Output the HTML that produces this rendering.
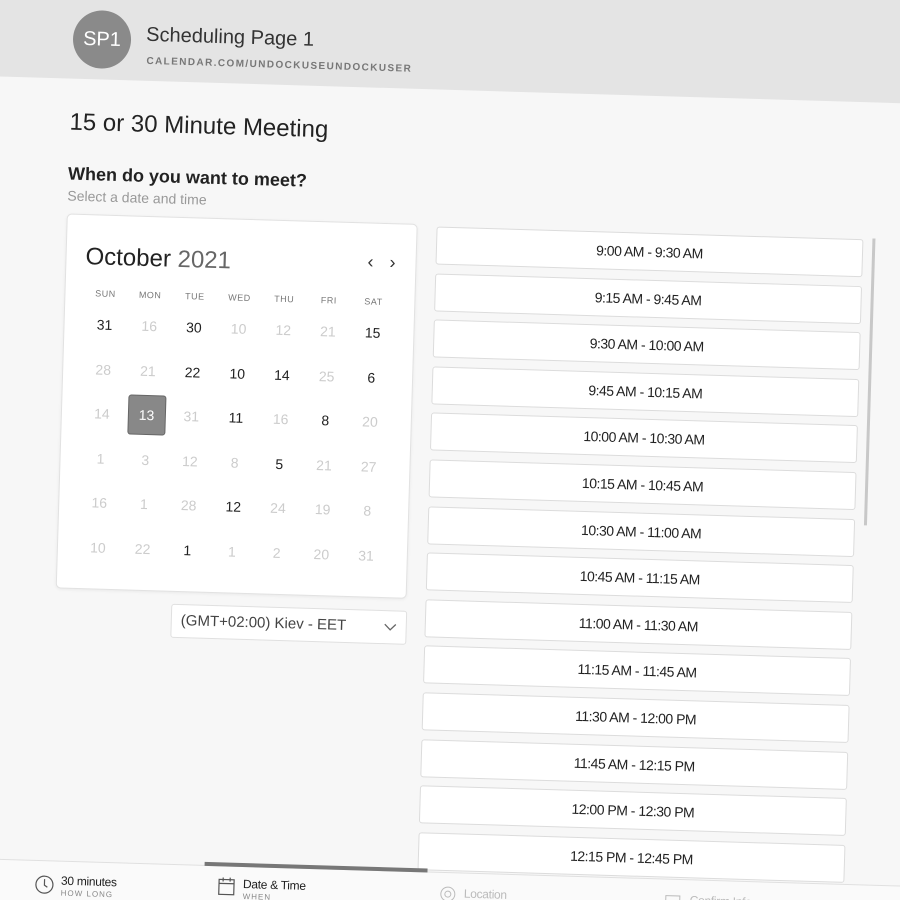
<!DOCTYPE html>
<html><head><meta charset="utf-8"><style>
*{margin:0;padding:0;box-sizing:border-box}
html,body{width:900px;height:900px;overflow:hidden;background:#f7f7f7;font-family:"Liberation Sans",sans-serif;color:#222}
.wrap{position:fixed;left:0;top:0;width:900px;height:900px;overflow:hidden;background:#f7f7f7}
.r{position:absolute;left:0;top:0;width:900px;height:900px;transform:rotate(1.7deg);transform-origin:450px 450px}
.a{position:absolute}
.hdr{left:-100px;top:-100px;width:1100px;height:190px;background:#e4e4e4}
.av{left:61px;top:21px;width:58px;height:58px;border-radius:50%;background:#8a8a8a;color:#fff;font-size:20px;line-height:58px;text-align:center}
.card{left:60px;top:225px;width:351px;height:375px;background:#fff;border:1px solid #e2e2e2;border-radius:5px;box-shadow:0 1px 3px rgba(0,0,0,.06)}
.wd{font-size:9px;color:#777;width:40px;text-align:center;letter-spacing:.5px}
.d{font-size:14px;width:40px;text-align:center;line-height:20px}
.l{color:#ccc}
.slot{left:430px;width:427px;height:38px;background:#fff;border:1px solid #dcdcdc;border-radius:3px;text-align:center;line-height:36px;font-size:14px;color:#222;letter-spacing:-.5px}
.bar{left:-100px;top:872px;width:1100px;height:90px;background:#fafafa;border-top:1px solid #e0e0e0}
.t1{font-size:12px;color:#222;letter-spacing:-.3px}
.t2{font-size:8px;color:#888;letter-spacing:1px}
</style></head><body><div class="wrap"><div class="r">
<div class="a hdr"></div>
<div class="a av">SP1</div>
<div class="a" style="left:134px;top:33px;font-size:20px;color:#333">Scheduling Page 1</div>
<div class="a" style="left:135px;top:65px;font-size:10px;color:#777;letter-spacing:1.4px;font-weight:bold">CALENDAR.COM/UNDOCKUSEUNDOCKUSER</div>
<div class="a" style="left:60px;top:120px;font-size:24px;color:#222">15 or 30 Minute Meeting</div>
<div class="a" style="left:60px;top:175px;font-size:18px;font-weight:bold;color:#222">When do you want to meet?</div>
<div class="a" style="left:60px;top:199px;font-size:14px;color:#999">Select a date and time</div>
<div class="a card"></div>
<div class="a" style="left:80px;top:254px;font-size:24px;color:#222">October <span style="color:#666">2021</span></div>
<div class="a" style="left:362px;top:254px;font-size:18px;color:#333">&#8249;</div>
<div class="a" style="left:384px;top:254px;font-size:18px;color:#333">&#8250;</div>
<div id="cal"></div>
<div class="a" style="left:176px;top:612px;width:236px;height:34px;background:#fff;border:1px solid #e0e0e0;border-radius:3px;font-size:15px;line-height:32px;padding-left:9px;color:#444">(GMT+02:00) Kiev - EET<svg style="position:absolute;right:9px;top:12px" width="13" height="8" viewBox="0 0 13 8"><path d="M1 1l5.5 5.5L12 1" fill="none" stroke="#666" stroke-width="1.3"/></svg></div>
<div id="slots"></div>
<div class="a" style="left:866px;top:226px;width:3px;height:287px;background:#c8c8c8"></div>
<div class="a bar"></div>
<div class="a" style="left:217px;top:869px;width:223px;height:4px;background:#777"></div>
<svg class="a" style="left:48px;top:887px" width="19" height="19" viewBox="0 0 19 19"><circle cx="9.5" cy="9.5" r="8.5" fill="none" stroke="#555" stroke-width="1.2"/><path d="M9.5 4v6l3 2" fill="none" stroke="#555" stroke-width="1.2"/></svg>
<div class="a t1" style="left:74px;top:885px">30 minutes</div>
<div class="a t2" style="left:74px;top:900px">HOW LONG</div>
<svg class="a" style="left:231px;top:883px" width="17" height="19" viewBox="0 0 17 19"><rect x="1" y="3" width="15" height="15" fill="none" stroke="#555" stroke-width="1.2"/><path d="M1 7h15M5 1v4M12 1v4" stroke="#555" stroke-width="1.2"/></svg>
<div class="a t1" style="left:256px;top:883px">Date &amp; Time</div>
<div class="a t2" style="left:256px;top:898px">WHEN</div>
<svg class="a" style="left:453px;top:886px" width="16" height="16" viewBox="0 0 16 16"><circle cx="8" cy="8" r="7" fill="none" stroke="#bbb"/><circle cx="8" cy="8" r="3" fill="none" stroke="#bbb"/></svg>
<div class="a t1" style="left:477px;top:886px;color:#bbb">Location</div>
<svg class="a" style="left:678px;top:888px" width="16" height="14" viewBox="0 0 16 14"><rect x="1" y="1" width="14" height="12" fill="none" stroke="#bbb"/></svg>
<div class="a t1" style="left:703px;top:886px;color:#bbb">Confirm Info</div>
</div></div>
<script>
var wd=["SUN","MON","TUE","WED","THU","FRI","SAT"],h="";
for(var i=0;i<7;i++)h+='<div class="a wd" style="left:'+(101+44.7*i-20)+'px;top:299px">'+wd[i]+'</div>';
var rows=[["31","16l","30","10l","12l","21l","15"],["28l","21l","22","10","14","25l","6"],["14l","13s","31l","11","16l","8","20l"],["1l","3l","12l","8l","5","21l","27l"],["16l","1l","28l","12","24l","19l","8l"],["10l","22l","1","1l","2l","20l","31l"]];
for(var r=0;r<6;r++)for(var c=0;c<7;c++){var v=rows[r][c],cx=101+44.7*c,cy=335+44.6*r,n=v.replace(/[ls]/,'');
if(v.indexOf('s')>0)h+='<div class="a" style="left:'+(cx-19)+'px;top:'+(cy-20)+'px;width:38px;height:40px;background:#888;border-radius:3px;border:1px solid #666"></div><div class="a d" style="left:'+(cx-20)+'px;top:'+(cy-10)+'px;color:#fff">'+n+'</div>';
else h+='<div class="a d'+(v.indexOf('l')>0?' l':'')+'" style="left:'+(cx-20)+'px;top:'+(cy-10)+'px">'+n+'</div>';}
document.getElementById('cal').outerHTML=h;
var s=["9:00 AM - 9:30 AM","9:15 AM - 9:45 AM","9:30 AM - 10:00 AM","9:45 AM - 10:15 AM","10:00 AM - 10:30 AM","10:15 AM - 10:45 AM","10:30 AM - 11:00 AM","10:45 AM - 11:15 AM","11:00 AM - 11:30 AM","11:15 AM - 11:45 AM","11:30 AM - 12:00 PM","11:45 AM - 12:15 PM","12:00 PM - 12:30 PM","12:15 PM - 12:45 PM","12:30 PM - 1:00 PM"],g="";
for(var k=0;k<s.length;k++)g+='<div class="a slot" style="top:'+(227+46.6*k)+'px">'+s[k]+'</div>';
document.getElementById('slots').outerHTML=g;
</script>
</body></html>
